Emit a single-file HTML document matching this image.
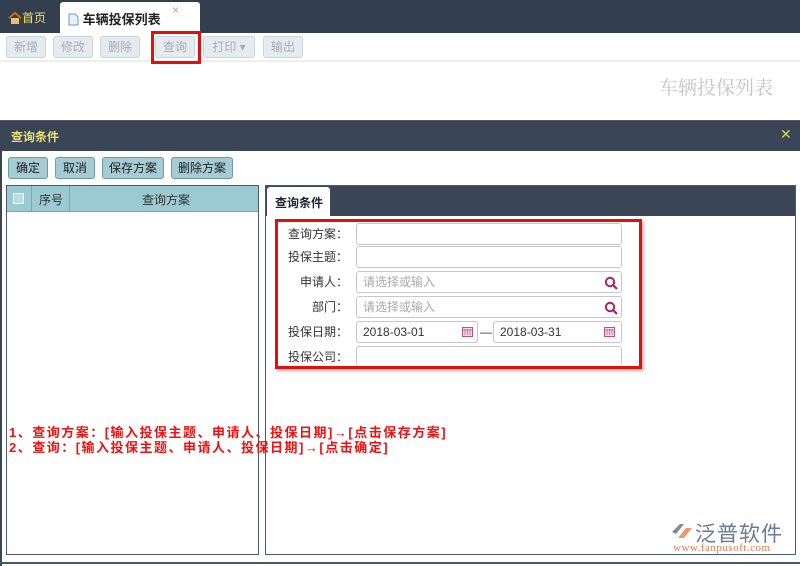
<!DOCTYPE html>
<html><head><meta charset="utf-8">
<style>
*{margin:0;padding:0;box-sizing:border-box}
body{width:800px;height:566px;position:relative;overflow:hidden;background:#fff;font-family:"Liberation Sans","Noto Sans CJK SC",sans-serif;font-size:12px;color:#333}
.a{position:absolute}
.btn{position:absolute;height:22px;border:1px solid #c8d6dc;border-radius:3px;background:#e4ecef;color:#aab;font-size:12px;line-height:20px;text-align:center}
.b2{position:absolute;top:157px;height:22px;border:1px solid #6f9aa4;border-radius:3px;background:#a6ccd3;color:#222;font-size:12px;line-height:20px;text-align:center}
.lbl{position:absolute;width:74px;text-align:right;font-size:12px;color:#333;line-height:22px;height:22px}
.inp{position:absolute;height:22px;border:1px solid #c8c8c8;border-radius:3px;background:#fff;font-size:12px;line-height:20px;padding-left:6px;color:#333}
.ph{color:#aaa}
.red{color:#f01010;font-weight:bold;font-size:13px;letter-spacing:1.5px;line-height:15px;white-space:nowrap}
</style></head><body>
<div class="a" style="left:0;top:0;width:800px;height:33px;background:#333f4e"></div>
<div class="a" style="left:8px;top:9px;color:#e8e060;font-size:12px"><svg width="14" height="12" style="vertical-align:-2px"><path d="M1 6 L7 1 L13 6" fill="none" stroke="#c86a28" stroke-width="2"/><rect x="3" y="6" width="8" height="6" fill="#e8c070"/></svg>首页</div>
<div class="a" style="left:60px;top:2px;width:140px;height:31px;background:#fff;border-radius:3px 3px 0 0"></div>
<div class="a" style="left:68px;top:9px;font-weight:bold;font-size:13px;color:#222"><svg width="11" height="13" style="vertical-align:-2px"><path d="M1 1H7L10 4V12H1Z" fill="#e8f2fa" stroke="#6a9ac8"/></svg> 车辆投保列表</div>
<div class="a" style="left:172px;top:3px;color:#e090a8;font-size:12px">×</div>
<div class="a" style="left:0;top:33px;width:800px;height:29px;background:#fff;border-bottom:2px solid #eee"></div>
<div class="btn" style="left:6px;top:36px;width:40px">新增</div>
<div class="btn" style="left:53px;top:36px;width:40px">修改</div>
<div class="btn" style="left:100px;top:36px;width:40px">删除</div>
<div class="btn" style="left:155px;top:36px;width:40px">查询</div>
<div class="a" style="left:151px;top:31px;width:50px;height:33px;border:3px solid #e01010"></div>
<div class="btn" style="left:203px;top:36px;width:52px">打印 ▾</div>
<div class="btn" style="left:263px;top:36px;width:40px">输出</div>
<div class="a" style="left:659px;top:73px;font-size:19px;color:#c4c4c4;font-family:'Noto Serif CJK SC',serif">车辆投保列表</div>
<div class="a" style="left:0;top:120px;width:800px;height:31px;background:#3a4656;border-top:1px solid #556"></div>
<div class="a" style="left:11px;top:128px;color:#ece070;font-weight:bold;font-size:12px">查询条件</div>
<div class="a" style="left:780px;top:126px;color:#d8d060;font-size:14px">✕</div>
<div class="a" style="left:0;top:151px;width:2px;height:415px;background:#3a4656"></div>
<div class="a" style="left:0;top:562px;width:800px;height:2px;background:#4a5666"></div>
<div class="b2" style="left:8px;width:40px">确定</div>
<div class="b2" style="left:55px;width:40px">取消</div>
<div class="b2" style="left:102px;width:62px">保存方案</div>
<div class="b2" style="left:171px;width:62px">删除方案</div>
<div class="a" style="left:6px;top:185px;width:253px;height:370px;border:1px solid #4a5a6a"></div>
<div class="a" style="left:7px;top:186px;width:251px;height:26px;background:#9ccad3;border-bottom:1px solid #7aa"></div>
<div class="a" style="left:13px;top:193px;width:11px;height:11px;border:1px solid #fff;background:#bcdde2"></div>
<div class="a" style="left:31px;top:186px;width:1px;height:26px;background:#7aa"></div>
<div class="a" style="left:69px;top:186px;width:1px;height:26px;background:#7aa"></div>
<div class="a" style="left:39px;top:191px">序号</div>
<div class="a" style="left:142px;top:191px">查询方案</div>
<div class="a" style="left:265px;top:185px;width:531px;height:370px;border:1px solid #4a5a6a"></div>
<div class="a" style="left:266px;top:186px;width:529px;height:30px;background:#3a4656"></div>
<div class="a" style="left:267px;top:187px;width:63px;height:29px;background:#fff;border-radius:3px 3px 0 0"></div>
<div class="a" style="left:275px;top:194px;font-weight:bold;color:#223">查询条件</div>
<div class="lbl" style="left:274px;top:223px">查询方案：</div>
<div class="inp" style="left:356px;top:223px;width:266px"></div>
<div class="lbl" style="left:274px;top:246px">投保主题：</div>
<div class="inp" style="left:356px;top:246px;width:266px"></div>
<div class="lbl" style="left:274px;top:271px">申请人：</div>
<div class="inp" style="left:356px;top:271px;width:266px"><span class="ph">请选择或输入</span></div>
<div class="lbl" style="left:274px;top:296px">部门：</div>
<div class="inp" style="left:356px;top:296px;width:266px"><span class="ph">请选择或输入</span></div>
<svg class="a" style="left:604px;top:276px" width="14" height="14"><circle cx="6" cy="6" r="4.2" fill="none" stroke="#b0205a" stroke-width="2"/><path d="M9 9L13 13" stroke="#b0205a" stroke-width="2.2"/></svg>
<svg class="a" style="left:604px;top:301px" width="14" height="14"><circle cx="6" cy="6" r="4.2" fill="none" stroke="#b0205a" stroke-width="2"/><path d="M9 9L13 13" stroke="#b0205a" stroke-width="2.2"/></svg>
<div class="lbl" style="left:274px;top:321px">投保日期：</div>
<div class="inp" style="left:356px;top:321px;width:122px">2018-03-01</div>
<div class="a" style="left:480px;top:325px;font-size:12px">—</div>
<div class="inp" style="left:493px;top:321px;width:129px">2018-03-31</div>
<svg class="a" style="left:462px;top:326px" width="11" height="11"><rect x="0.5" y="1.5" width="10" height="9" fill="#f6dce8" stroke="#c05080"/><path d="M0.5 4H10.5M3 3V9M5.5 3V9M8 3V9" stroke="#c05080" stroke-width="0.7"/></svg>
<svg class="a" style="left:604px;top:326px" width="11" height="11"><rect x="0.5" y="1.5" width="10" height="9" fill="#f6dce8" stroke="#c05080"/><path d="M0.5 4H10.5M3 3V9M5.5 3V9M8 3V9" stroke="#c05080" stroke-width="0.7"/></svg>
<div class="lbl" style="left:274px;top:346px">投保公司：</div>
<div class="inp" style="left:356px;top:346px;width:266px;height:20px;border-bottom:none"></div>
<div class="a" style="left:275px;top:219px;width:367px;height:150px;border:3px solid #e01010;box-shadow:2px 2px 3px rgba(0,0,0,.3)"></div>
<div class="a red" style="left:9px;top:425px">1、查询方案：[输入投保主题、申请人、投保日期]→[点击保存方案]</div>
<div class="a red" style="left:9px;top:440px">2、查询：[输入投保主题、申请人、投保日期]→[点击确定]</div>
<svg class="a" style="left:670px;top:522px" width="24" height="20"><path d="M2 10 L10 2 L14 2 L6 12 Z" fill="#7a8aa0"/><path d="M8 16 L16 6 L22 6 L14 16 Z" fill="#e89a6a"/></svg>
<div class="a" style="left:695px;top:518px;font-size:21px;color:#6a7a90;letter-spacing:1px">泛普软件</div>
<div class="a" style="left:673px;top:542px;font-size:11px;color:#e07a50;font-family:'Liberation Serif',serif;letter-spacing:0.5px">www.fanpusoft.com</div>
</body></html>
